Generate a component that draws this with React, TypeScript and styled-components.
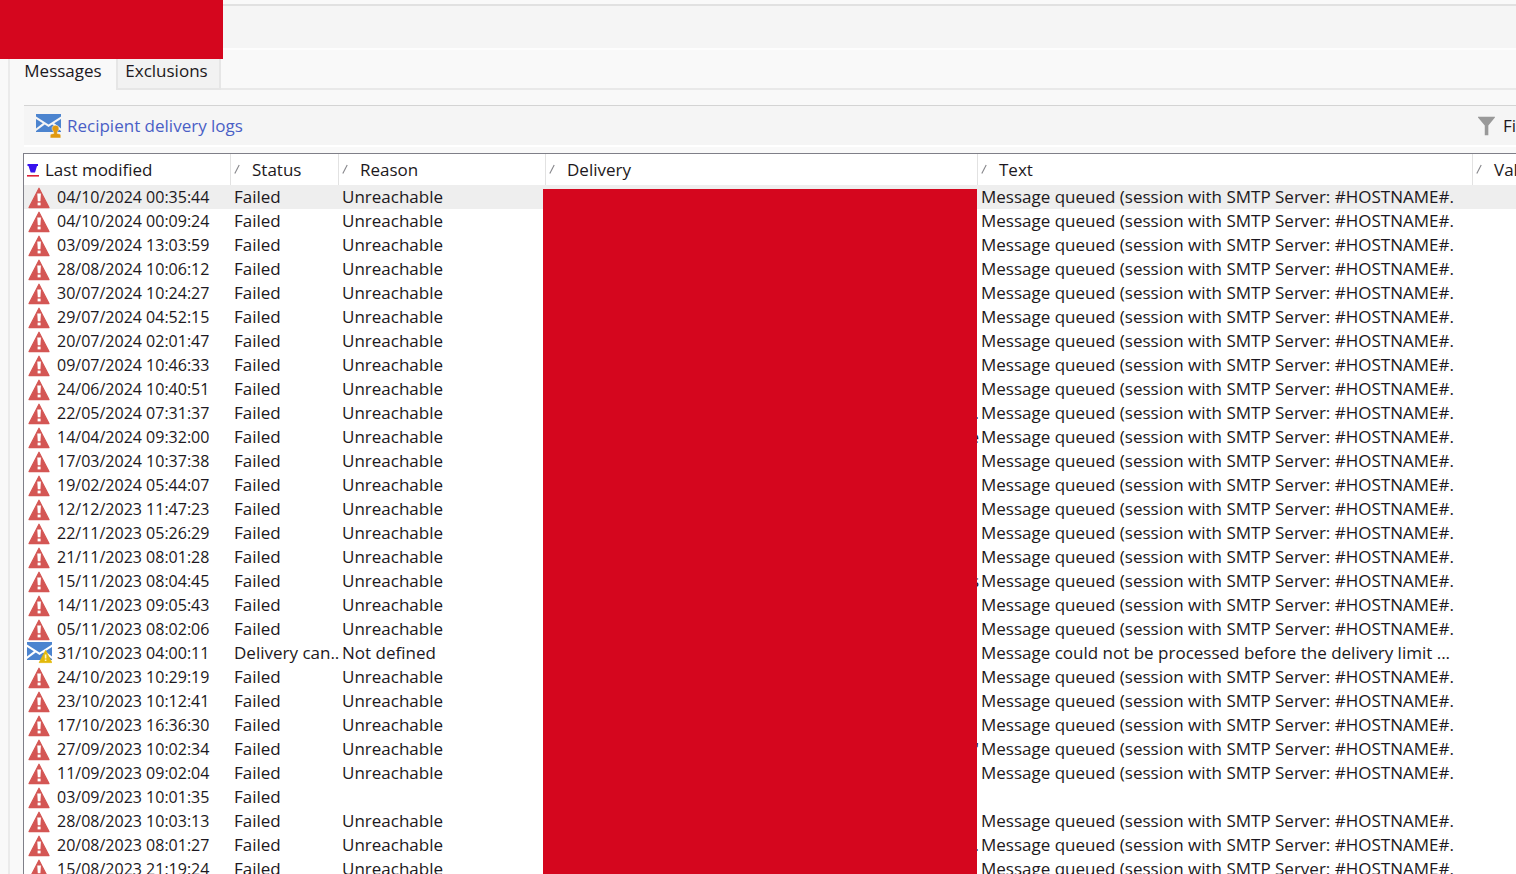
import React from "react";
import styled, { createGlobalStyle } from "styled-components";

const GlobalStyle = createGlobalStyle`
  * { box-sizing: border-box; }
  html, body { margin: 0; padding: 0; }
  body {
    background: #f9f9f9;
    color: #1c1820;
    font-family: "Open Sans", "Noto Sans", sans-serif;
    font-size: 17px;
    line-height: 24px;
    overflow: hidden;
  }
  button { font: inherit; color: inherit; border: 0; padding: 0; background: none; cursor: pointer; }
`;

const red = "#d5061e";

const Page = styled.div`
  position: relative;
  height: 100vh;
  display: flex;
  flex-direction: column;
  overflow: hidden;
`;

const TopBar = styled.header`
  flex: none;
  height: 46px;
  margin-top: 4px;
  border-top: 2px solid #e1e1e1;
  border-bottom: 2px solid #fdfdfd;
  background: #f5f5f5;
`;

const TitleCover = styled.div`
  position: absolute;
  top: 0;
  left: 0;
  width: 223px;
  height: 59px;
  background: ${red};
`;

const TabPanel = styled.main`
  flex: 1;
  min-height: 0;
  margin-left: 8px;
  border-left: 2px solid #ebebeb;
  display: flex;
  flex-direction: column;
`;

const Tabs = styled.div`
  flex: none;
  display: flex;
  height: 40px;
`;

const Tab = styled.button<{ $active?: boolean }>`
  width: ${(p) => (p.$active ? "106px" : "105px")};
  padding: ${(p) => (p.$active ? "0 0 5px" : "0 4px 5px 0")};
  border: solid ${(p) => (p.$active ? "transparent" : "#e6e6e6")};
  border-width: ${(p) => (p.$active ? "0 0 2px" : "0 2px 2px")};
  background: ${(p) => (p.$active ? "transparent" : "#f2f2f2")};
  display: flex;
  align-items: flex-end;
  justify-content: center;
`;

const TabLine = styled.div`
  flex: 1;
  border-bottom: 2px solid #e9e9e9;
`;

const Toolbar = styled.div`
  flex: none;
  display: flex;
  align-items: center;
  justify-content: space-between;
  height: 42px;
  margin: 15px 0 6px 14px;
  padding-left: 12px;
  border-top: 1px solid #d4d4d4;
  border-bottom: 2px solid #ffffff;
  background: #f5f5f5;
`;

const LogsLink = styled.a`
  display: flex;
  align-items: center;
  gap: 6px;
  color: #4a5fc6;
  text-decoration: none;
`;

const FilterButton = styled.button`
  display: flex;
  align-items: center;
  gap: 8px;
  width: 38px;
  white-space: nowrap;
`;

const Grid = styled.section`
  position: relative;
  flex: 1;
  min-height: 0;
  margin-left: 13px;
  border-top: 1px solid #7f7f88;
  border-left: 1px solid #7f7f88;
  background: #ffffff;
  overflow: hidden;
`;

const DeliveryCover = styled.div`
  position: absolute;
  top: 35px;
  bottom: 0;
  left: 519px;
  width: 434px;
  background: ${red};
`;

const Table = styled.table`
  width: 100%;
  table-layout: fixed;
  border-collapse: separate;
  border-spacing: 0;
`;

const Col = styled.col<{ $width?: number }>`
  width: ${(p) => (p.$width ? `${p.$width}px` : "auto")};
`;

const HeadCell = styled.th`
  height: 31px;
  padding: 0 0 0 3px;
  border-right: 1px solid #e2e2e2;
  font-weight: 400;
  text-align: left;
  white-space: nowrap;
  &:last-child { border-right: 0; }
`;

const SortButton = styled.button<{ $sorted?: boolean }>`
  display: flex;
  align-items: center;
  gap: ${(p) => (p.$sorted ? "6px" : "12px")};
`;

const Row = styled.tr<{ $selected: boolean }>`
  background: ${(p) => (p.$selected ? "#eeeeee" : "transparent")};
`;

const Cell = styled.td`
  height: 24px;
  padding: 0 0 0 3px;
  white-space: nowrap;
`;

const DateCell = styled.div`
  display: flex;
  align-items: center;
  height: 24px;
  font-size: 16px;
  svg { flex: none; }
`;

const IconSlot = styled.span`
  display: flex;
  justify-content: center;
  flex: none;
  width: 24px;
  margin-right: 6px;
`;

const Recipient = styled.div`
  width: 430px;
  height: 24px;
  text-align: right;
`;

const Warning = () => (
  <svg width="22" height="24" viewBox="0 0 22 24" aria-hidden="true">
    <path d="M11 3.2 L21 22.6 H1 Z" fill="#d45654" stroke="#d45654" strokeWidth="1.2" strokeLinejoin="round" />
    <path d="M9.3 8.6 h3.6 l-.5 7.6 h-2.6 Z" fill="#fff" />
    <rect x="9.6" y="17.6" width="3" height="2.8" fill="#fff" />
  </svg>
);

const Envelope = ({ badge }: { badge: "person" | "warning" }) => (
  <svg width="25" height="25" viewBox="0 0 25 25" aria-hidden="true">
    <path d="M0 1 H25 V3.4 L12.5 11.4 L0 3.4 Z" fill="#4c84cf" />
    <path d="M0 6 L6.8 10.3 L0 15.6 Z M25 6 L18.2 10.3 L25 15.6 Z" fill="#4c84cf" />
    <path d="M0 18 L8.8 11.6 L12.5 13.9 L16.2 11.6 L25 18 V19 H0 Z" fill="#4c84cf" />
    {badge === "person" ? (
      <path
        d="M19.5 12.3 C22.2 12.3 23.3 14.3 22.9 16.2 C22.6 17.6 21.2 18.4 21.2 20.4 L23.6 21 Q24.8 21.4 24.8 22.6 V25 H14.2 V22.6 Q14.2 21.4 15.4 21 L17.8 20.4 C17.8 18.4 16.4 17.6 16.1 16.2 C15.7 14.3 16.8 12.3 19.5 12.3 Z"
        fill="#e0990f"
        stroke="#f5f5f5"
        strokeWidth="0.5"
      />
    ) : (
      <>
        <path d="M18.6 9.4 L24.8 21.6 H12.2 Z" fill="#e2b90a" stroke="#e2b90a" strokeWidth="0.8" strokeLinejoin="round" />
        <path d="M17.8 13.4 h1.6 v4.2 h-1.6 Z M17.8 18.6 h1.6 v1.5 h-1.6 Z" fill="#fff4bd" />
      </>
    )}
  </svg>
);

const Funnel = () => (
  <svg width="19" height="22" viewBox="0 0 19 22" aria-hidden="true">
    <path d="M0 0.5 H19 V1.5 L11.6 10.5 V21.5 H7.6 V10.5 L0 1.5 Z" fill="#999" />
  </svg>
);

const SortedMark = () => (
  <svg width="12" height="14" viewBox="0 0 12 14" aria-hidden="true">
    <path d="M0.5 1 H11 V3 H10 L8 9.5 H3.7 L1.5 3 H0.5 Z" fill="#3712ee" />
    <rect x="0" y="12" width="12" height="1.6" fill="#dc2038" />
  </svg>
);

const Slash = () => (
  <svg width="6" height="12" viewBox="0 0 6 12" aria-hidden="true">
    <path d="M0.8 9.5 L5.2 1" stroke="#85858a" strokeWidth="1.1" fill="none" />
  </svg>
);

const columns: { label: string; width?: number }[] = [
  { label: "Last modified", width: 207 },
  { label: "Status", width: 108 },
  { label: "Reason", width: 207 },
  { label: "Delivery", width: 432 },
  { label: "Text", width: 495 },
  { label: "Val" },
];

type Message = {
  date: string;
  status: string;
  reason: string;
  recipient: string;
  text: string;
};

const QUEUED = "Message queued (session with SMTP Server: #HOSTNAME#.";

const failed = (date: string, recipient = ""): Message => ({
  date,
  status: "Failed",
  reason: "Unreachable",
  recipient,
  text: QUEUED,
});

const messages: Message[] = [
  failed("04/10/2024 00:35:44"),
  failed("04/10/2024 00:09:24"),
  failed("03/09/2024 13:03:59"),
  failed("28/08/2024 10:06:12"),
  failed("30/07/2024 10:24:27"),
  failed("29/07/2024 04:52:15"),
  failed("20/07/2024 02:01:47"),
  failed("09/07/2024 10:46:33"),
  failed("24/06/2024 10:40:51"),
  failed("22/05/2024 07:31:37", "."),
  failed("14/04/2024 09:32:00", "e"),
  failed("17/03/2024 10:37:38"),
  failed("19/02/2024 05:44:07"),
  failed("12/12/2023 11:47:23"),
  failed("22/11/2023 05:26:29"),
  failed("21/11/2023 08:01:28"),
  failed("15/11/2023 08:04:45", "s"),
  failed("14/11/2023 09:05:43"),
  failed("05/11/2023 08:02:06"),
  {
    date: "31/10/2023 04:00:11",
    status: "Delivery can..",
    reason: "Not defined",
    recipient: "",
    text: "Message could not be processed before the delivery limit ...",
  },
  failed("24/10/2023 10:29:19"),
  failed("23/10/2023 10:12:41"),
  failed("17/10/2023 16:36:30"),
  failed("27/09/2023 10:02:34", "'"),
  failed("11/09/2023 09:02:04"),
  { date: "03/09/2023 10:01:35", status: "Failed", reason: "", recipient: "", text: "" },
  failed("28/08/2023 10:03:13"),
  failed("20/08/2023 08:01:27", "."),
  failed("15/08/2023 21:19:24"),
];

export default function App() {
  return (
    <>
      <GlobalStyle />
      <Page>
        <TopBar />
        <TabPanel>
          <Tabs role="tablist">
            <Tab role="tab" aria-selected="true" $active>Messages</Tab>
            <Tab role="tab" aria-selected="false">Exclusions</Tab>
            <TabLine />
          </Tabs>
          <Toolbar>
            <LogsLink href="#logs">
              <Envelope badge="person" />
              Recipient delivery logs
            </LogsLink>
            <FilterButton type="button">
              <Funnel />
              Fi
            </FilterButton>
          </Toolbar>
          <Grid>
            <Table>
              <colgroup>
                {columns.map((c) => (
                  <Col key={c.label} $width={c.width} />
                ))}
              </colgroup>
              <thead>
                <tr>
                  {columns.map((c, i) => (
                    <HeadCell key={c.label} scope="col">
                      <SortButton type="button" $sorted={i === 0}>
                        {i === 0 ? <SortedMark /> : <Slash />}
                        {c.label}
                      </SortButton>
                    </HeadCell>
                  ))}
                </tr>
              </thead>
              <tbody>
                {messages.map((m, i) => (
                  <Row key={m.date} $selected={i === 0}>
                    <Cell>
                      <DateCell>
                        <IconSlot>
                          {m.status === "Failed" ? <Warning /> : <Envelope badge="warning" />}
                        </IconSlot>
                        {m.date}
                      </DateCell>
                    </Cell>
                    <Cell>{m.status}</Cell>
                    <Cell>{m.reason}</Cell>
                    <Cell>
                      <Recipient>{m.recipient}</Recipient>
                    </Cell>
                    <Cell>{m.text}</Cell>
                    <Cell />
                  </Row>
                ))}
              </tbody>
            </Table>
            <DeliveryCover />
          </Grid>
        </TabPanel>
        <TitleCover />
      </Page>
    </>
  );
}
